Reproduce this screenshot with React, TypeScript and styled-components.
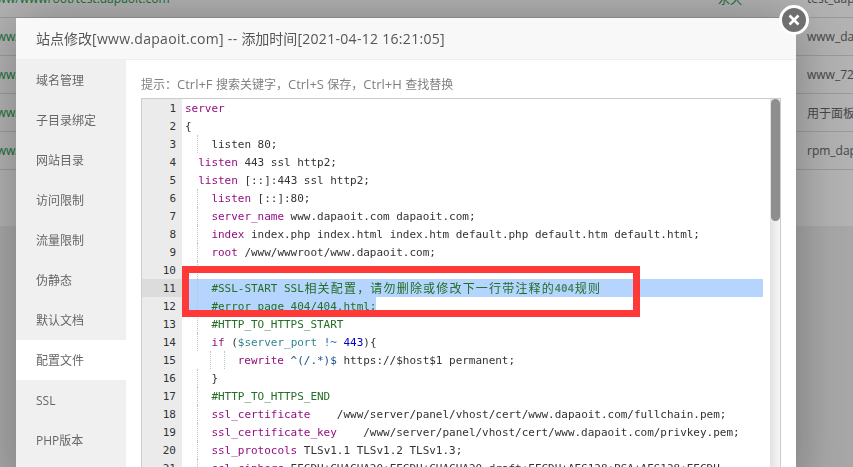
import * as React from 'react';
import styled, { createGlobalStyle } from 'styled-components';

const GlobalStyle = createGlobalStyle`
  html, body {
    margin: 0;
    height: 467px;
    overflow: hidden;
    background: #f0f0f0;
    font-family: "Open Sans", "Noto Sans CJK SC", sans-serif;
  }
`;

const Page = styled.div`
  height: 467px;
  overflow: hidden;
`;
const Table = styled.div`
  margin-top: -20px;
  background: #fff;
  padding-bottom: 56px;
`;
const Row = styled.div`
  height: 38px;
  display: grid;
  grid-template-columns: 718px 89px 1fr;
  align-items: center;
  border-bottom: 1px solid #ddd;
  box-sizing: border-box;
  font-size: 12px;
  color: #666;
  white-space: nowrap;
  overflow: hidden;
`;
const PathCell = styled.div`
  color: #20a04a;
  margin-left: -17px;
`;
const StatusCell = styled.div`
  color: #20a04a;
`;
const Shade = styled.div`
  position: fixed;
  inset: 0;
  background: rgba(0, 0, 0, 0.3);
`;
const Modal = styled.div`
  position: fixed;
  left: 16px;
  top: 18px;
  width: 780px;
  height: 470px;
  background: #fff;
  box-shadow: 1px 1px 50px rgba(0, 0, 0, 0.3);
  display: flex;
  flex-direction: column;
`;
const Close = styled.div`
  position: absolute;
  right: -13px;
  top: -13px;
  width: 30px;
  height: 30px;
  box-sizing: border-box;
  border: 3px solid #fff;
  border-radius: 50%;
  background: #707070;
  display: flex;
  align-items: center;
  justify-content: center;
`;
const Title = styled.div`
  height: 42px;
  flex: none;
  box-sizing: border-box;
  padding-left: 20px;
  line-height: 41px;
  font-size: 14px;
  color: #555;
  background: #f8f8f8;
  border-bottom: 1px solid #eee;
`;
const Latin = styled.span`
  letter-spacing: 0.3px;
`;
const Body = styled.div`
  flex: 1;
  display: flex;
  min-height: 0;
`;
const Side = styled.div`
  width: 110px;
  flex: none;
  background: #f0f0f0;
`;
const SideItem = styled.div<{ $active?: boolean }>`
  height: 40px;
  line-height: 42px;
  padding-left: 20px;
  font-size: 12px;
  color: #666;
  background: ${p => (p.$active ? '#fff' : 'transparent')};
`;
const Content = styled.div`
  flex: 1;
  padding: 15px 15px 0;
  min-width: 0;
`;
const Hint = styled.div`
  height: 23px;
  line-height: 18px;
  font-size: 12px;
  color: #808080;
`;
const Key = styled.span`
  font-size: 13px;
`;
const Editor = styled.div`
  position: relative;
  display: flex;
  width: 640px;
  box-sizing: border-box;
  border: 1px solid #ccc;
  font-family: "DejaVu Sans Mono", monospace;
  font-size: 11px;
  line-height: 20px;
  color: #333;
`;
const Gutter = styled.div`
  width: 40px;
  flex: none;
  background: #ebebeb;
`;
const LineNo = styled.div<{ $active?: boolean }>`
  height: 18px;
  padding-right: 6px;
  text-align: right;
  background: ${p => (p.$active ? '#dcdcdc' : 'transparent')};
`;
const Code = styled.div`
  width: 581px;
  flex: none;
  overflow: hidden;
`;
const Line = styled.div<{ $select?: 'full' | 'partial' }>`
  height: 18px;
  padding-left: 3px;
  white-space: pre;
  letter-spacing: -0.02px;
  width: ${p => (p.$select === 'partial' ? 'fit-content' : 'auto')};
  background: ${p => (p.$select ? '#b5d5ff' : 'transparent')};
`;
const Indent = styled.span<{ $guide?: boolean }>`
  display: inline-block;
  box-sizing: border-box;
  width: 13.2px;
  height: 18px;
  vertical-align: top;
  border-right: ${p => (p.$guide ? '1px dotted #c4c4c4' : '0')};
`;
const TOKEN_COLORS = {
  kw: '#930f80',
  vr: '#318495',
  cm: '#236e24',
  nm: '#0000cd',
  op: '#2f6fb0',
  re: '#23508f',
  tx: '#333',
  hl: '#4b8a66',
};
type Kind = keyof typeof TOKEN_COLORS;
const Tok = styled.span<{ $kind: Kind }>`
  color: ${p => TOKEN_COLORS[p.$kind]};
  ${p => (p.$kind === 'hl' ? 'font-weight: bold;' : '')}
`;
const Wide = styled.span`
  display: inline-block;
  width: 13.2px;
  text-align: center;
  font-family: "Noto Sans CJK SC", sans-serif;
  font-size: 12px;
  line-height: 18px;
  vertical-align: top;
  color: #236e24;
`;
const Track = styled.div`
  width: 10px;
  flex: none;
  margin-left: auto;
  background: linear-gradient(to right, #e2e2e2, #f6f6f6);
`;
const Thumb = styled.div`
  height: 122px;
  margin: 0 0 0 1px;
  width: 9px;
  border-radius: 5px;
  background: #8e8e8e;
`;
const Mark = styled.div`
  position: absolute;
  left: 40px;
  top: 167px;
  width: 458px;
  height: 51px;
  box-sizing: border-box;
  border: 7px solid #ff3838;
`;

type Tk = [Kind, string] | string;
interface CodeLine {
  guides: number[];
  indent?: number;
  tokens: Tk[];
  select?: 'full' | 'partial';
}

// guides: 每 2 字符一格，数字是带虚线的格子下标
const LINES: CodeLine[] = [
  { guides: [], tokens: [['kw', 'server']] },
  { guides: [], tokens: ['{'] },
  { guides: [0], indent: 2, tokens: ['listen 80;'] },
  { guides: [], indent: 1, tokens: [['kw', 'listen'], ' 443 ssl http2;'] },
  { guides: [], indent: 1, tokens: [['kw', 'listen'], ' [::]:443 ssl http2;'] },
  { guides: [0], indent: 2, tokens: [['kw', 'listen'], ' [::]:80;'] },
  { guides: [0], indent: 2, tokens: [['kw', 'server_name'], ' www.dapaoit.com dapaoit.com;'] },
  { guides: [0], indent: 2, tokens: [['kw', 'index'], ' index.php index.html index.htm default.php default.htm default.html;'] },
  { guides: [0], indent: 2, tokens: [['kw', 'root'], ' /www/wwwroot/www.dapaoit.com;'] },
  { guides: [0], indent: 2, tokens: [] },
  {
    guides: [0],
    indent: 2,
    select: 'full',
    tokens: [['cm', '#SSL-START SSL'], ['cm', '@相关配置，请勿删除或修改下一行带注释的'], ['hl', '404'], ['cm', '@规则']],
  },
  { guides: [0], indent: 2, select: 'partial', tokens: [['cm', '#error_page 404/404.html;']] },
  { guides: [0], indent: 2, tokens: [['cm', '#HTTP_TO_HTTPS_START']] },
  {
    guides: [0],
    indent: 2,
    tokens: [['kw', 'if'], ' (', ['vr', '$server_port'], ' ', ['op', '!~'], ' ', ['nm', '443'], '){'],
  },
  {
    guides: [1, 2],
    indent: 4,
    tokens: [['kw', 'rewrite'], ' ', ['re', '^(/.*)$'], ' https://$host$1 permanent;'],
  },
  { guides: [0], indent: 2, tokens: ['}'] },
  { guides: [0], indent: 2, tokens: [['cm', '#HTTP_TO_HTTPS_END']] },
  {
    guides: [0],
    indent: 2,
    tokens: [['kw', 'ssl_certificate'], '    /www/server/panel/vhost/cert/www.dapaoit.com/fullchain.pem;'],
  },
  {
    guides: [0],
    indent: 2,
    tokens: [['kw', 'ssl_certificate_key'], '    /www/server/panel/vhost/cert/www.dapaoit.com/privkey.pem;'],
  },
  { guides: [0], indent: 2, tokens: [['kw', 'ssl_protocols'], ' TLSv1.1 TLSv1.2 TLSv1.3;'] },
  {
    guides: [0],
    indent: 2,
    tokens: [['kw', 'ssl_ciphers'], ' EECDH+CHACHA20:EECDH+CHACHA20-draft:EECDH+AES128:RSA+AES128:EECDH'],
  },
];

const MENU = ['域名管理', '子目录绑定', '网站目录', '访问限制', '流量限制', '伪静态', '默认文档', '配置文件', 'SSL', 'PHP版本'];

const ROWS = [
  { path: '/www/wwwroot/test.dapaoit.com', status: '永久', note: 'test_dapaoit' },
  { path: '/www/wwwroot/www.dapaoit.com', status: '永久', note: 'www_dapaoit' },
  { path: '/www/wwwroot/www.72.com', status: '永久', note: 'www_72' },
  { path: '/www/wwwroot/panel', status: '永久', note: '用于面板' },
  { path: '/www/wwwroot/rpm.dapaoit.com', status: '永久', note: 'rpm_dapaoit' },
];

function renderToken(t: Tk, i: number) {
  if (typeof t === 'string') return <React.Fragment key={i}>{t}</React.Fragment>;
  const [kind, text] = t;
  if (text.startsWith('@')) {
    return Array.from(text.slice(1)).map((c, j) => <Wide key={`${i}-${j}`}>{c}</Wide>);
  }
  return (
    <Tok key={i} $kind={kind}>
      {text}
    </Tok>
  );
}

export default function App() {
  return (
    <Page>
      <GlobalStyle />
      <Table>
        {ROWS.map(r => (
          <Row key={r.path}>
            <PathCell>{r.path}</PathCell>
            <StatusCell>{r.status}</StatusCell>
            <div>{r.note}</div>
          </Row>
        ))}
      </Table>
      <Shade />
      <Modal>
        <Close>
          <svg width="16" height="16" viewBox="0 0 16 16">
            <path d="M3.5 3.5l9 9M12.5 3.5l-9 9" stroke="#fff" strokeWidth="2.6" fill="none" />
          </svg>
        </Close>
        <Title>
          站点修改<Latin>[www.dapaoit.com] -- </Latin>添加时间<Latin>[2021-04-12 16:21:05]</Latin>
        </Title>
        <Body>
          <Side>
            {MENU.map(m => (
              <SideItem key={m} $active={m === '配置文件'}>
                {m}
              </SideItem>
            ))}
          </Side>
          <Content>
            <Hint>
              提示：<Key>Ctrl+F </Key>搜索关键字，<Key>Ctrl+S </Key>保存，<Key>Ctrl+H </Key>查找替换
            </Hint>
            <Editor>
              <Gutter>
                {LINES.map((_, i) => (
                  <LineNo key={i} $active={i === 10}>
                    {i + 1}
                  </LineNo>
                ))}
              </Gutter>
              <Code>
                {LINES.map((l, i) => (
                  <Line key={i} $select={l.select}>
                    {Array.from({ length: l.indent || 0 }).map((_, k) => (
                      <Indent key={k} $guide={l.guides.includes(k)} />
                    ))}
                    {l.tokens.map(renderToken)}
                  </Line>
                ))}
              </Code>
              <Track>
                <Thumb />
              </Track>
              <Mark />
            </Editor>
          </Content>
        </Body>
      </Modal>
    </Page>
  );
}
